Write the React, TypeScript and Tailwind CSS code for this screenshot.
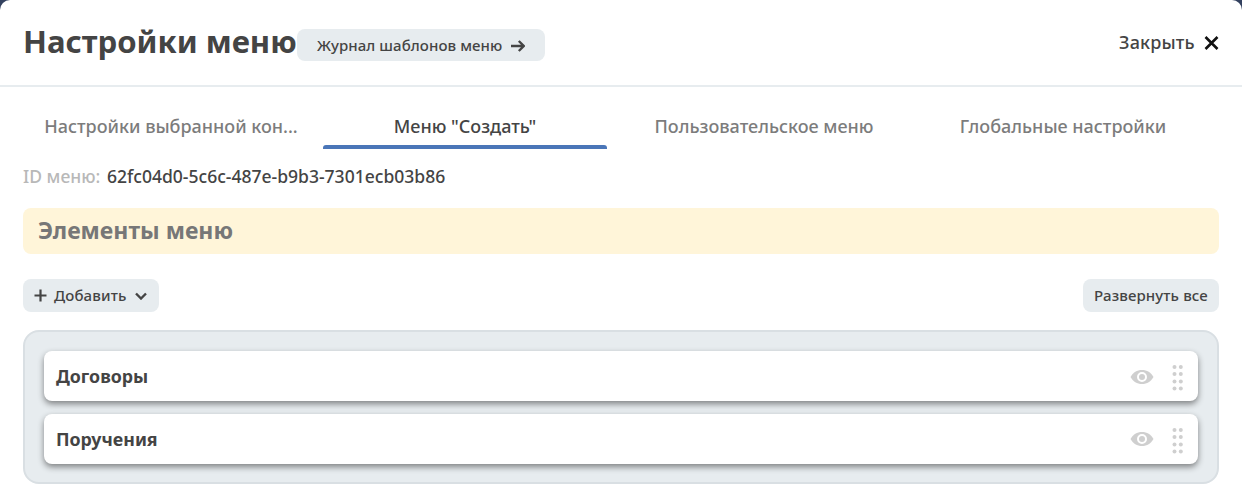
import React from "react";

const tabs = [
  { label: "Настройки выбранной кон...", cell: "w-[296px] mr-1", active: false },
  { label: 'Меню "Создать"', cell: "w-[284px] mr-[15px]", active: true },
  { label: "Пользовательское меню", cell: "w-[284px] mr-[15px]", active: false },
  { label: "Глобальные настройки", cell: "w-[284px]", active: false },
];

const items = [
  { name: "Договоры", eye: "pt-px" },
  { name: "Поручения", eye: "" },
];

function Eye() {
  return (
    <svg width="24" height="16" viewBox="0 0 24 16" fill="none">
      <path d="M.5 8C3 3.600 7 1 12 1s9 2.600 11.500 7C21 12.400 17 15 12 15S3 12.400.5 8Z" fill="#cfcfcf" />
      <circle cx="12" cy="8" r="4" fill="#cfcfcf" stroke="#fff" strokeWidth="2" />
    </svg>
  );
}

function Grip() {
  return (
    <svg width="12" height="26" viewBox="0 0 12 26" fill="#cfcfcf">
      {[2, 9, 16.5, 23.5].map((y) => (
        <React.Fragment key={y}>
          <circle cx="2.500" cy={y} r="2" />
          <circle cx="8.800" cy={y} r="2" />
        </React.Fragment>
      ))}
    </svg>
  );
}

export default function App() {
  return (
    <div className="h-[490px] w-full overflow-hidden bg-[#33415f] font-['Noto_Sans','Open_Sans',sans-serif] text-[#444]">
      <div className="h-full rounded-t-[10px] bg-white">
        <header className="flex h-[87px] items-start border-b-2 border-[#e7ecef] pl-[23px] pr-[23px]">
          <h1 className="mt-[21px] w-[274px] whitespace-nowrap text-[31.1px] leading-[40px] font-bold">Настройки меню</h1>
          <button className="mt-[29px] flex h-8 w-[248px] items-center rounded-lg bg-[#e7ecef] pl-5 text-left text-[15px] font-[550] tracking-[0.08px] whitespace-nowrap">
            <span className="w-[194px]">Журнал шаблонов меню</span>
            <svg className="mt-px" width="14" height="12" viewBox="0 0 14 12" fill="none" stroke="#444" strokeWidth="2.400">
              <path d="M0 6h12.500M7.800 1l5 5-5 5" />
            </svg>
          </button>
          <button className="mt-[30px] ml-auto flex h-6 items-center text-left whitespace-nowrap text-[18px] font-medium">
            <span className="w-[85px] tracking-[0.15px]">Закрыть</span>
            <svg className="mt-px" width="15" height="14" viewBox="0 0 15 14" fill="none" stroke="#111" strokeWidth="2.600">
              <path d="M1.500 1l12 12M13.500 1l-12 12" />
            </svg>
          </button>
        </header>

        <main className="px-[23px]">
          <nav className="flex h-[62px]">
            {tabs.map((tab) => (
              <div key={tab.label} className={`flex shrink-0 flex-col justify-end ${tab.cell}`}>
                <span className={`mb-[6px] text-center text-[18px] leading-[26px] font-medium whitespace-nowrap ${tab.active ? "text-[#444]" : "text-[#7c7c7c]"}`}>
                  {tab.label}
                </span>
                <span className={`h-1 rounded-t-[3px] ${tab.active ? "bg-[#4a76b8]" : "bg-transparent"}`} />
              </div>
            ))}
          </nav>

          <div className="mt-[14px] flex h-[26px] items-center whitespace-nowrap text-[17.55px] font-medium">
            <span className="w-[84px] text-[#b8b8b8]">ID меню:</span>
            <span>62fc04d0-5c6c-487e-b9b3-7301ecb03b86</span>
          </div>

          <h2 className="mt-[19px] flex h-[46px] items-center rounded-lg bg-[#fff5d9] pb-px pl-[15px] text-[23px] font-bold text-[#777]">
            Элементы меню
          </h2>

          <div className="mt-[25px] flex h-[33px] justify-between text-[15px] font-[550] tracking-[0.12px]">
            <button className="flex w-[136px] items-center rounded-lg bg-[#e7ecef] pl-[11px]">
              <svg width="13" height="13" viewBox="0 0 13 13" stroke="#444" strokeWidth="2.200">
                <path d="M6.500.5v12M.5 6.500h12" />
              </svg>
              <span className="ml-[7px] w-[81px] text-left">Добавить</span>
              <svg className="mt-px" width="12" height="8" viewBox="0 0 12 8" fill="none" stroke="#444" strokeWidth="2.400">
                <path d="M1 1.500l5 5 5-5" />
              </svg>
            </button>
            <button className="w-[136px] rounded-lg bg-[#e7ecef] whitespace-nowrap">Развернуть все</button>
          </div>

          <section className="mt-[18px] flex h-[154px] flex-col gap-[13px] rounded-2xl border-2 border-[#d9dfe3] bg-[#e7ecef] px-[19px] pt-[19px]">
            {items.map((item) => (
              <div key={item.name} className="flex h-[50px] items-center rounded-lg bg-white pr-[14px] pl-3 shadow-[0_3px_6px_rgba(0,0,0,0.45)]">
                <span className="text-[17.8px] font-bold">{item.name}</span>
                <span className="ml-auto flex items-center gap-[18px]">
                  <span className={item.eye}>
                    <Eye />
                  </span>
                  <span className="pt-[3px]">
                    <Grip />
                  </span>
                </span>
              </div>
            ))}
          </section>
        </main>
      </div>
    </div>
  );
}
